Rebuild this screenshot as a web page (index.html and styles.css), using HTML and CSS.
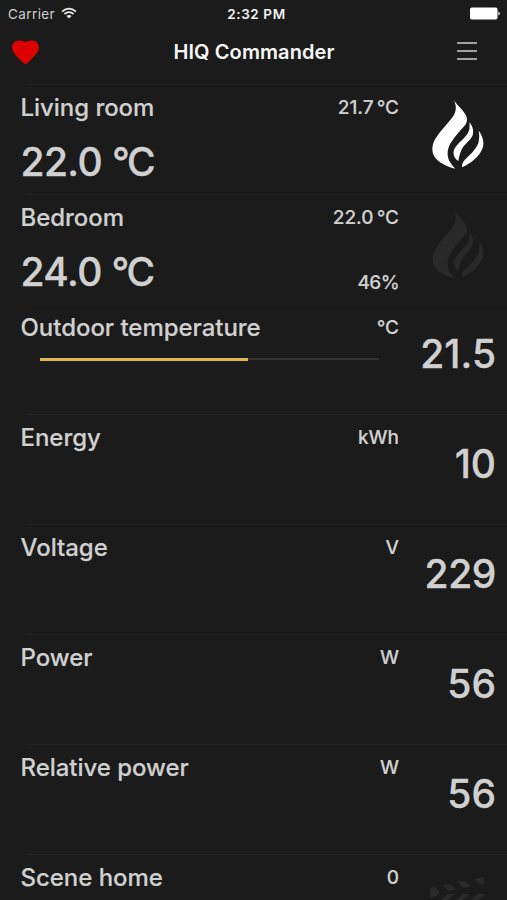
FILE: index.html
```html
<!DOCTYPE html>
<html lang="en">
<head>
<meta charset="utf-8">
<title>HIQ Commander</title>
<link rel="stylesheet" href="styles.css">
</head>
<body>
<svg class="defs" aria-hidden="true">
  <symbol id="flame" viewBox="-51 -30 291 330">
    <path d="M80 14C89 30 106 41 115 58C121 69 122 80 115 89C99 108 79 129 69 148C60 165 60 183 67 198Q72 208 85 221C62 216 34 203 23 186C12 169 15 148 26 130C40 107 61 88 77 66C88 50 90 34 80 14Z"/>
    <path d="M127 82C136 92 141 106 137 121C132 134 116 145 107 158Q98 172 94 198C82 190 77 178 81 165C87 149 109 134 121 117Q131 102 127 82Z"/>
    <path d="M155 107C166 120 173 142 167 159C158 184 132 205 105 217C104 206 110 197 121 187C136 173 150 158 155 141Q159 124 155 107Z"/>
  </symbol>
</svg>
<div class="screen">
  <div class="status">
    <div class="carrier"><span>Carrier</span>
      <svg class="wifi" viewBox="0 0 16 12"><path d="M1 4.6Q8-1.4 15 4.6M3.4 7Q8 3.2 12.6 7" fill="none" stroke="#e8e8e8" stroke-width="1.8"/><path d="M5.4 8.9Q8 7 10.600 8.900L8 11.600Z" fill="#e8e8e8"/></svg>
    </div>
    <div class="clock">2:32 PM</div>
    <div class="battery"><svg viewBox="0 0 31 13"><rect x="0" y="0.500" width="27.500" height="12" rx="1.800" fill="#fff"/><path d="M28.300 4.500Q30 5 30 6.500T28.300 8.500Z" fill="#ddd"/></svg></div>
  </div>
  <div class="nav">
    <svg class="heart" viewBox="0 0 27 25"><path d="M13.500 24.300C11 23 1 14 .3 9C-.5 3.500 3 .5 7 .5Q11 .5 13.500 2.300Q16 .5 20 .5C24 .5 27.500 3.500 26.700 9C26 14 16 23 13.500 24.300Z" fill="#dc0000"/></svg>
    <div class="brand">HIQ Commander</div>
    <div class="menu"><i></i><i></i><i></i></div>
  </div>
  <div class="list">
    <div class="row">
      <div class="main"><div class="name">Living room</div><div class="big left">22.0 <span class="deg">°</span>C</div></div>
      <div class="side"><span>21.7<span class="thin"></span>°C</span></div>
      <div class="end"><svg class="flame on"><use href="#flame"/></svg></div>
    </div>
    <div class="row">
      <div class="main"><div class="name">Bedroom</div><div class="big left">24.0 <span class="deg">°</span>C</div></div>
      <div class="side"><span>22.0<span class="thin"></span>°C</span><span class="pct">46%</span></div>
      <div class="end"><svg class="flame off"><use href="#flame"/></svg></div>
    </div>
    <div class="row faint">
      <div class="main"><div class="name">Outdoor temperature</div><div class="track"><div class="fill"></div></div></div>
      <div class="side"><span>°C</span></div>
      <div class="end"><div class="big">21.5</div></div>
    </div>
    <div class="row">
      <div class="main"><div class="name">Energy</div></div>
      <div class="side"><span>kWh</span></div>
      <div class="end"><div class="big">10</div></div>
    </div>
    <div class="row">
      <div class="main"><div class="name">Voltage</div></div>
      <div class="side"><span>V</span></div>
      <div class="end"><div class="big narrow">229</div></div>
    </div>
    <div class="row">
      <div class="main"><div class="name">Power</div></div>
      <div class="side"><span>W</span></div>
      <div class="end"><div class="big">56</div></div>
    </div>
    <div class="row">
      <div class="main"><div class="name">Relative power</div></div>
      <div class="side"><span>W</span></div>
      <div class="end"><div class="big">56</div></div>
    </div>
    <div class="row">
      <div class="main"><div class="name">Scene home</div></div>
      <div class="side"><span>0</span></div>
      <div class="end"><svg class="clap" viewBox="0 0 60 50" fill="#292929"><path d="M0 11L6 10L10 16L5 20L0 21ZM13 8L20 7L26 12L19 14ZM27 5L34 4L41 9L34 11ZM44 2L54 0V8L49 7ZM11 23L18 17H25L18 23ZM26 23L33 17H40L33 23ZM41 23L48 17H56L48 23Z"/></svg></div>
    </div>
  </div>
</div>
</body>
</html>
```
FILE: styles.css
```css
* { box-sizing: border-box; }
body {
  margin: 0;
  background: #1b1b1b;
  color: #d0d0d0;
  font-family: Inter, "Liberation Sans", sans-serif;
  overflow: hidden;
}
.defs { display: none; }
.screen { height: 900px; overflow: hidden; }
.status {
  display: grid;
  grid-template-columns: 1fr auto 1fr;
  align-items: center;
  height: 28px;
  padding: 0 7px 0 8px;
  font-size: 13.5px;
}
.carrier { display: flex; align-items: center; gap: 6px; color: #cfcfcf; letter-spacing: .4px; }
.wifi { width: 16px; height: 12px; margin-top: -2px; }
.clock { color: #f2f2f2; font-weight: 600; letter-spacing: .6px; padding-left: 5px; }
.battery { display: flex; justify-content: flex-end; }
.battery svg { width: 31px; height: 13px; margin-right: -1px; margin-top: -1px; }
.nav {
  display: grid;
  grid-template-columns: 80px 1fr 80px;
  align-items: center;
  height: 56px;
  padding: 0 30px 8px 12px;
}
.heart { width: 27px; height: 25px; }
.brand { color: #f7f7f7; font-size: 20px; font-weight: 600; line-height: 24px; text-align: center; padding-left: 19px; letter-spacing: .1px; }
.menu { display: flex; flex-direction: column; gap: 6px; width: 20px; justify-self: end; margin-top: -3px; }
.menu i { height: 2px; background: #a2a2a2; }
.row {
  display: grid;
  grid-template-columns: 279px 120px 1fr;
  height: 110px;
  background: linear-gradient(#222, #222) 27px 0 / 100% 1px no-repeat;
}
.row.faint { background: linear-gradient(#1d1d1d, #1d1d1d) 27px 0 / 100% 1px no-repeat; }
.name, .big, .side { font-weight: 500; -webkit-text-stroke: .18px #d0d0d0; }
.main { padding: 8.5px 0 0 20.5px; white-space: nowrap; }
.name { font-size: 24px; line-height: 30px; letter-spacing: -.04px; }
.big { font-size: 39px; line-height: 48px; white-space: nowrap; -webkit-text-stroke-width: .35px; }
.big.left { margin-top: 15.5px; letter-spacing: -.6px; }
.big.narrow { letter-spacing: -.4px; }
.deg { letter-spacing: -2.8px; }
.side {
  display: flex;
  flex-direction: column;
  justify-content: space-between;
  align-items: flex-end;
  padding: 12px 0 10px;
  font-size: 19px;
  line-height: 24px;
}
.pct { letter-spacing: -.6px; }
.thin { display: inline-block; width: 3px; }
.end { display: flex; justify-content: flex-end; padding-top: 26px; }
.end .big { margin-right: 11px; }
.flame { width: 97px; height: 110px; margin-top: -25px; flex: none; }
.on { fill: #fff; }
.off { fill: #292929; }
.track { width: 339px; height: 2px; margin: 15px 0 0 19.5px; background: #333; }
.fill { width: 208px; height: 3px; background: #e0b552; }
.clap { width: 60px; height: 50px; margin: -3px 17px 0 0; flex: none; }
```
